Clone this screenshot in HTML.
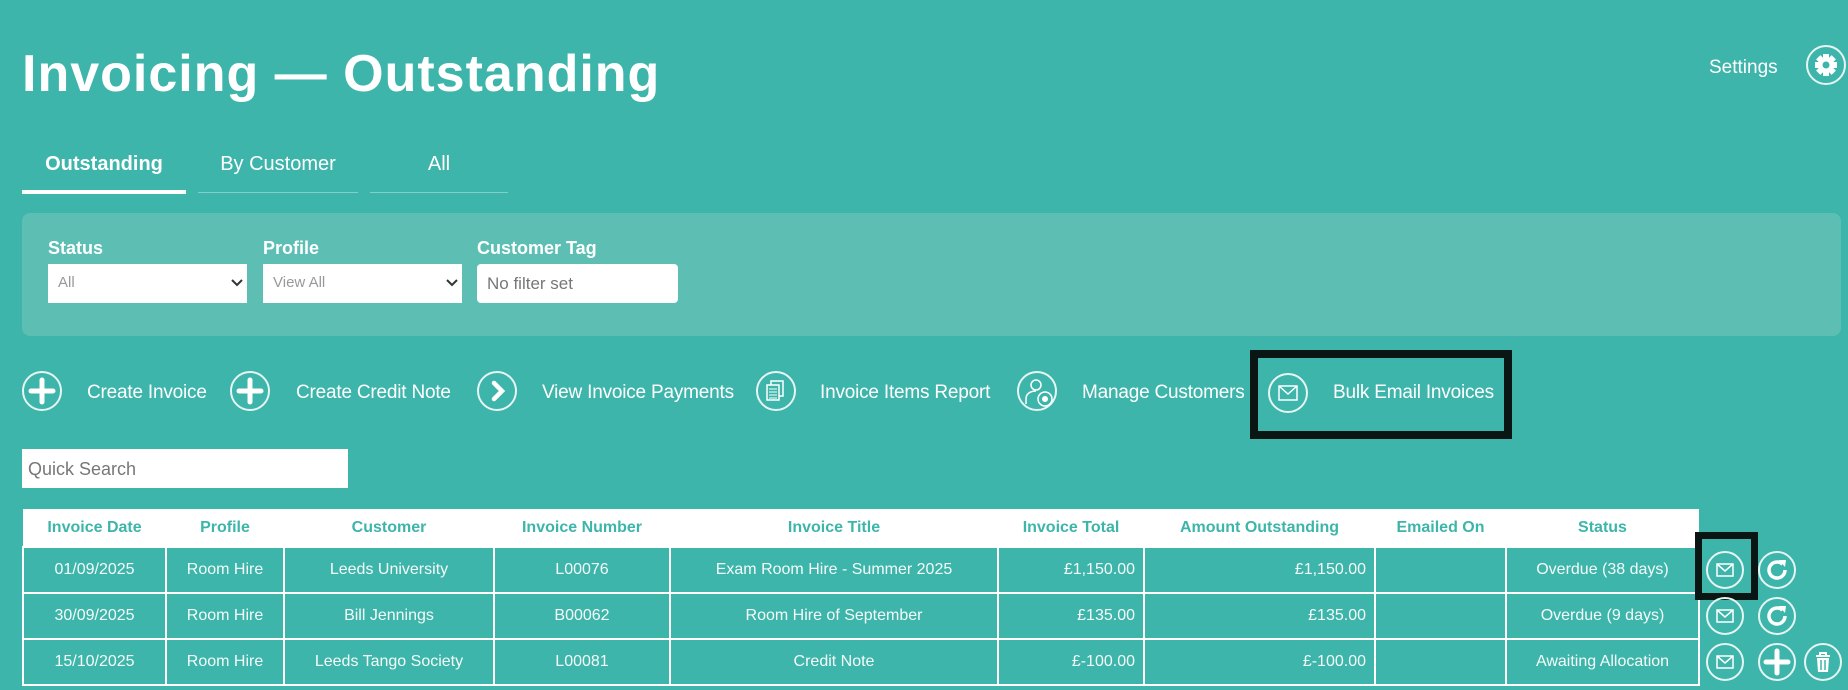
<!DOCTYPE html>
<html><head><meta charset="utf-8"><style>
*{box-sizing:border-box;margin:0;padding:0}
body{width:1848px;height:690px;overflow:hidden;background:#3db5aa;font-family:"Liberation Sans",sans-serif;color:#fff;position:relative}
.a{position:absolute;white-space:nowrap}
h1{position:absolute;left:22px;top:44px;font-size:52px;font-weight:bold;letter-spacing:1px}
.tab{position:absolute;top:153px;font-size:20px;text-align:center}
.ul{position:absolute;top:192px;height:1px;background:#7fd0c8}
.panel{position:absolute;left:22px;top:213px;width:1819px;height:123px;background:#5dbfb4;border-radius:8px}
.lbl{position:absolute;top:238px;font-size:18px;font-weight:bold}
.sel{position:absolute;top:264px;height:39px;background:#fff;color:#999;font-size:15px;padding:10px 10px}
.sel svg{position:absolute;right:4px;top:14px}
.act{position:absolute;top:382px;font-size:19px;letter-spacing:-0.2px}
.ic{position:absolute;width:40px;height:40px;border:2px solid #e6f5f3;border-radius:50%}
table{position:absolute;left:22px;top:509px;width:1678px;border-collapse:collapse}
th{background:#fff;color:#3db5aa;font-size:16px;height:38px;font-weight:bold;border:none}
td{height:46px;border:2px solid #fff;font-size:16px;text-align:center;color:#f4fbfa;padding:0 8px}
td.r{text-align:right}
.ri{position:absolute;width:38px;height:38px;border:2px solid #e6f5f3;border-radius:50%}
</style></head><body>
<h1>Invoicing — Outstanding</h1>
<div class="a" style="left:1709px;top:57px;font-size:19px">Settings</div>
<div class="ic" style="left:1806px;top:45px;width:40px;height:40px">
<svg width="36" height="36" viewBox="0 0 36 36"><g fill="#fff" transform="translate(18 18)"><circle r="8"/><rect x="-3" y="-11" width="6" height="22"/><rect x="-3" y="-11" width="6" height="22" transform="rotate(45)"/><rect x="-3" y="-11" width="6" height="22" transform="rotate(90)"/><rect x="-3" y="-11" width="6" height="22" transform="rotate(135)"/></g><circle cx="18" cy="18" r="3.5" fill="#3db5aa"/></svg></div>

<div class="tab" style="left:22px;width:164px;font-weight:bold">Outstanding</div>
<div class="tab" style="left:198px;width:160px">By Customer</div>
<div class="tab" style="left:370px;width:138px">All</div>
<div class="ul" style="left:22px;width:164px;height:4px;top:190px;background:#fff"></div>
<div class="ul" style="left:198px;width:160px"></div>
<div class="ul" style="left:370px;width:138px"></div>

<div class="panel"></div>
<div class="lbl" style="left:48px">Status</div>
<div class="lbl" style="left:263px">Profile</div>
<div class="lbl" style="left:477px">Customer Tag</div>
<div class="sel" style="left:48px;width:199px">All<svg width="12" height="10"><path d="M1 2l5 5 5-5" stroke="#333" stroke-width="2" fill="none"/></svg></div>
<div class="sel" style="left:263px;width:199px">View All<svg width="12" height="10"><path d="M1 2l5 5 5-5" stroke="#333" stroke-width="2" fill="none"/></svg></div>
<div class="sel" style="left:477px;width:201px;border-radius:4px;color:#777;font-size:17px;padding-top:10px">No filter set</div>

<div class="ic" style="left:22px;top:371px"><svg width="36" height="36"><path d="M18 7v22M7 18h22" stroke="#fff" stroke-width="5" stroke-linecap="round"/></svg></div>
<div class="act" style="left:87px">Create Invoice</div>
<div class="ic" style="left:230px;top:371px"><svg width="36" height="36"><path d="M18 7v22M7 18h22" stroke="#fff" stroke-width="5" stroke-linecap="round"/></svg></div>
<div class="act" style="left:296px">Create Credit Note</div>
<div class="ic" style="left:477px;top:371px"><svg width="36" height="36"><path d="M15 10l8 8-8 8" stroke="#fff" stroke-width="4.5" fill="none" stroke-linecap="round"/></svg></div>
<div class="act" style="left:542px">View Invoice Payments</div>
<div class="ic" style="left:756px;top:371px"><svg width="36" height="36"><rect x="13" y="8" width="12" height="15" fill="none" stroke="#fff" stroke-width="1.5"/><rect x="9" y="12" width="12" height="15" fill="#3db5aa" stroke="#fff" stroke-width="1.5"/><path d="M11 16h8M11 19h8M11 22h8M11 25h8" stroke="#fff"/></svg></div>
<div class="act" style="left:820px">Invoice Items Report</div>
<div class="ic" style="left:1017px;top:371px"><svg width="36" height="36"><circle cx="17" cy="12" r="5" fill="none" stroke="#fff" stroke-width="1.5"/><path d="M7 31v-5c0-5 4-8 10-8" fill="none" stroke="#fff" stroke-width="1.5"/><circle cx="26" cy="26" r="7" fill="#3db5aa" stroke="#fff" stroke-width="1.5"/><circle cx="26" cy="26" r="3" fill="#fff"/></svg></div>
<div class="act" style="left:1082px">Manage Customers</div>
<div class="a" style="left:1250px;top:350px;width:262px;height:89px;border:8px solid #0a1614"></div>
<div class="ic" style="left:1268px;top:373px"><svg width="36" height="36"><rect x="9" y="11" width="18" height="14" fill="none" stroke="#fff" stroke-width="1.5"/><path d="M9 11l9 8 9-8" fill="none" stroke="#fff" stroke-width="1.5"/></svg></div>
<div class="act" style="left:1333px">Bulk Email Invoices</div>

<div class="a" style="left:22px;top:449px;width:326px;height:39px;background:#fff;color:#777;font-size:18px;padding:10px 6px">Quick Search</div>

<table>
<tr><th style="width:143px">Invoice Date</th><th style="width:118px">Profile</th><th style="width:210px">Customer</th><th style="width:176px">Invoice Number</th><th style="width:328px">Invoice Title</th><th style="width:146px">Invoice Total</th><th style="width:231px">Amount Outstanding</th><th style="width:131px">Emailed On</th><th>Status</th></tr>
<tr><td>01/09/2025</td><td>Room Hire</td><td>Leeds University</td><td>L00076</td><td>Exam Room Hire - Summer 2025</td><td class="r">£1,150.00</td><td class="r">£1,150.00</td><td></td><td>Overdue (38 days)</td></tr>
<tr><td>30/09/2025</td><td>Room Hire</td><td>Bill Jennings</td><td>B00062</td><td>Room Hire of September</td><td class="r">£135.00</td><td class="r">£135.00</td><td></td><td>Overdue (9 days)</td></tr>
<tr><td>15/10/2025</td><td>Room Hire</td><td>Leeds Tango Society</td><td>L00081</td><td>Credit Note</td><td class="r">£-100.00</td><td class="r">£-100.00</td><td></td><td>Awaiting Allocation</td></tr>
</table>

<svg width="0" height="0" style="position:absolute"><defs>
<g id="m"><rect x="9" y="11" width="16" height="12" fill="none" stroke="#fff" stroke-width="1.5"/><path d="M9 11l8 7 8-7" fill="none" stroke="#fff" stroke-width="1.5"/></g>
<g id="rf"><path d="M25 17a8 8 0 1 1-2.5-5.8" fill="none" stroke="#fff" stroke-width="3.5"/><path d="M19 7l7 0-1 7z" fill="#fff"/></g>
</defs></svg>
<div class="ri" style="left:1706px;top:551px"><svg width="34" height="34"><use href="#m"/></svg></div>
<div class="ri" style="left:1758px;top:551px"><svg width="34" height="34"><use href="#rf"/></svg></div>
<div class="a" style="left:1695px;top:532px;width:63px;height:68px;border:7px solid #0a1614"></div>
<div class="ri" style="left:1706px;top:597px"><svg width="34" height="34"><use href="#m"/></svg></div>
<div class="ri" style="left:1758px;top:597px"><svg width="34" height="34"><use href="#rf"/></svg></div>
<div class="ri" style="left:1706px;top:643px"><svg width="34" height="34"><use href="#m"/></svg></div>
<div class="ri" style="left:1758px;top:643px"><svg width="34" height="34"><path d="M17 6v22M6 17h22" stroke="#fff" stroke-width="5" stroke-linecap="round"/></svg></div>
<div class="ri" style="left:1804px;top:643px"><svg width="34" height="34"><path d="M10 11h14M14 11v-3h6v3" fill="none" stroke="#fff" stroke-width="2"/><path d="M11 13h12l-1 14h-10z" fill="#fff"/><path d="M15 15v10M19 15v10" stroke="#3db5aa" stroke-width="1.5"/></svg></div>
</body></html>
